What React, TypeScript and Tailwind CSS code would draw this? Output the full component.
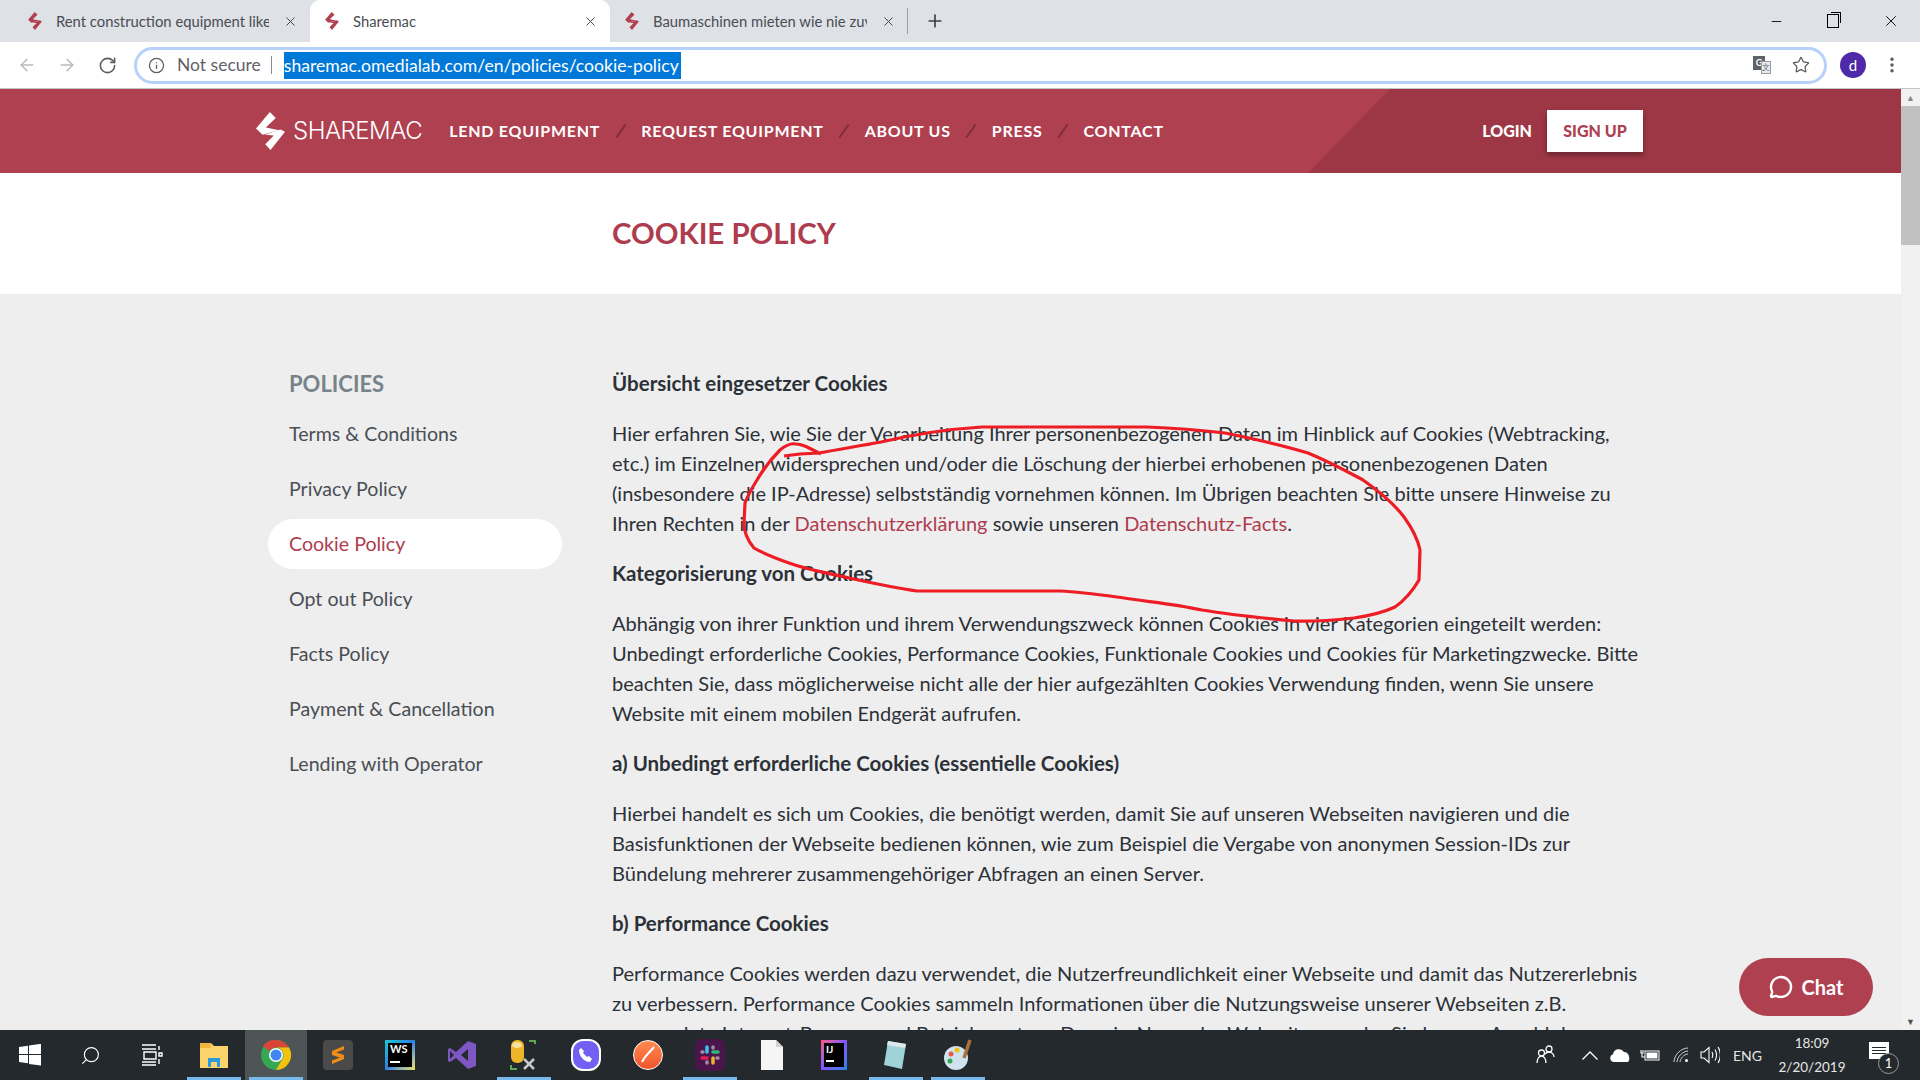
import { ArrowLeft, ArrowRight, RotateCw, Info, Star, MoreVertical, Plus, X, Minus, Search, MessageCircle } from "lucide-react";

const Bolt = ({ c = "#b03f50", w = 14, h = 18 }: { c?: string; w?: number; h?: number }) => (
  <svg width={w} height={h} viewBox="18 15 88 115" className="shrink-0">
    <path d="M60 15L78 33L48 62L88 70L38 84L18 65Z" fill={c} />
    <path d="M92 68L106 75L62 130L46 113L72 86L45 84Z" fill={c} />
  </svg>
);

function Tab({ title, active, w, lead }: { title: string; active?: boolean; w: string; lead?: boolean }) {
  return (
    <div className={`${w} h-[42px] flex items-center pr-[12px] gap-[14px] ${lead ? "pl-[26px]" : "pl-[15px]"} ${active ? "bg-white rounded-t-[10px]" : ""}`}>
      <Bolt />
      <span className="flex-1 text-[14.800px] text-[#4a4d52] overflow-hidden whitespace-nowrap">{title}</span>
      <X size={15} strokeWidth={1.5} className="text-[#3c3f43] shrink-0" />
    </div>
  );
}

const Slash = () => <span className="block w-[2px] h-[16px] bg-[#7f2f3c] rotate-[35deg] mx-[19.500px]" />;

const nav = ["LEND EQUIPMENT", "REQUEST EQUIPMENT", "ABOUT US", "PRESS", "CONTACT"];
const side = ["Terms & Conditions", "Privacy Policy", "Cookie Policy", "Opt out Policy", "Facts Policy", "Payment & Cancellation", "Lending with Operator"];

const H = ({ children }: { children: React.ReactNode }) => <h3 className="font-bold text-[20.500px] leading-[30px] mb-[20px] text-[#2c3138]">{children}</h3>;
const P = ({ children }: { children: React.ReactNode }) => <p className="text-[20.050px] leading-[30px] mb-[20px] text-[#2c3138]">{children}</p>;

function TaskIcon({ children, active, under }: { children: React.ReactNode; active?: boolean; under?: boolean }) {
  return (
    <div className={`relative w-[62px] h-[50px] flex items-center justify-center ${active ? "bg-[#4e5557]" : ""}`}>
      {children}
      {under && <div className="absolute bottom-0 left-[4px] right-[4px] h-[3px] bg-[#76b9ed]" />}
    </div>
  );
}

export default function App() {
  return (
    <div className="w-[1920px] h-[1080px] flex flex-col overflow-hidden relative bg-white" style={{ fontFamily: '"Lato","Noto Sans",sans-serif' }}>
      {/* tab strip */}
      <div className="h-[42px] bg-[#dee1e6] flex items-center shrink-0">
        <div className="w-[2px]" />
        <Tab title="Rent construction equipment like" w="w-[308px]" lead />
        <Tab title="Sharemac" active w="w-[300px]" />
        <Tab title="Baumaschinen mieten wie nie zuvor" w="w-[298px]" />
        <div className="w-px h-[26px] bg-[#9aa0a6] ml-[-1px]" />
        <Plus size={20} strokeWidth={2} className="ml-[17px] text-[#3c4043]" />
        <div className="flex-1" />
        <Minus size={15} strokeWidth={1.4} className="text-black mr-[43px]" />
        <div className="relative w-[12px] h-[14px] border border-black mr-[43px]"><div className="absolute -top-[3px] -right-[3px] w-[10px] h-[11px] border-t border-r border-black" /></div>
        <X size={18} strokeWidth={1.2} className="text-black mr-[20px]" />
      </div>
      {/* toolbar */}
      <div className="h-[47px] bg-white border-b border-[#c4c4c4] flex items-center shrink-0">
        <ArrowLeft size={20} strokeWidth={1.7} className="ml-[17px] text-[#b8babd]" />
        <ArrowRight size={20} strokeWidth={1.7} className="ml-[20px] text-[#b8babd]" />
        <RotateCw size={19} strokeWidth={2} className="ml-[21px] text-[#5a5d61]" />
        <div className="ml-[17px] w-[1693px] h-[37px] rounded-full border-[3px] border-[#b6d2fb] flex items-center pl-[11px] pr-[14px]">
          <Info size={17} strokeWidth={1.8} className="text-[#5a5d61]" />
          <span className="ml-[12px] text-[17.500px] text-[#5f6368]">Not secure</span>
          <span className="ml-[10px] w-px h-[18px] bg-[#8a8d91]" />
          <span className="ml-[12px] h-[27px] bg-[#0078d7] text-white text-[17.600px] leading-[27px] w-[397px] whitespace-nowrap overflow-hidden">sharemac.omedialab.com/en/policies/cookie-policy</span>
          <div className="flex-1" />
          <div className="relative w-[18px] h-[18px] mr-[21px]"><div className="absolute left-0 top-0 w-[12px] h-[14px] bg-[#5f6368] text-white text-[9px] leading-[14px] text-center font-bold">G</div><div className="absolute right-0 bottom-0 w-[10px] h-[13px] bg-[#e8eaed] border border-[#9a9da1] text-[8px] leading-[11px] text-center text-[#5f6368]">文</div></div>
          <Star size={18} strokeWidth={1.7} className="text-[#5a5d61]" />
        </div>
        <div className="ml-[13px] w-[26px] h-[26px] rounded-full bg-[#4e2aa8] text-white text-[15px] leading-[26px] text-center">d</div>
        <MoreVertical size={20} strokeWidth={2.2} className="ml-[16px] text-[#5a5d61]" />
      </div>

      {/* page */}
      <div className="flex-1 flex min-h-0 relative">
        <div className="flex-1 min-w-0 overflow-hidden flex flex-col relative">
          <header className="h-[84px] shrink-0 bg-[#af404f] relative overflow-hidden flex items-center">
            <svg className="absolute inset-0" width="1901" height="84" viewBox="0 0 1901 84"><polygon points="1390,0 1901,0 1901,84 1308,84" fill="#9d3745" /></svg>
            <div className="relative flex items-center w-full pl-[256px] pr-[258px]">
              <Bolt c="#ffffff" w={29} h={38} />
              <span className="ml-[8px] text-[24px] leading-none text-white tracking-[-0.5px] font-light" style={{ fontFamily: '"Inter",sans-serif' }}>SHAREMAC</span>
              <nav className="ml-[27px] flex items-center text-white font-bold text-[16px] tracking-[0.75px]">
                {nav.map((n, i) => (
                  <div key={n} className="flex items-center">
                    {i > 0 && <Slash />}
                    <span>{n}</span>
                  </div>
                ))}
              </nav>
              <div className="flex-1" />
              <span className="text-white font-black text-[16px] mr-[15px]">LOGIN</span>
              <button className="w-[96px] h-[42px] bg-white text-[#af404f] font-black text-[16px] shadow-[0_3px_5px_rgba(0,0,0,0.35)]">SIGN UP</button>
            </div>
          </header>
          <div className="h-[121px] shrink-0 bg-white pl-[612px] flex items-center">
            <h1 className="text-[29.400px] font-bold text-[#ae3c4e] leading-none -translate-y-[1px]">COOKIE POLICY</h1>
          </div>
          <div className="flex-1 min-h-0 bg-[#eeeeee] flex pl-[268px] pt-[74px] overflow-hidden">
            <aside className="w-[294px] shrink-0 pt-[1px]">
              <div className="pl-[21px] h-[30px] text-[22px] leading-[30px] font-bold text-[#77838a] mb-[10px]">POLICIES</div>
              <ul>
                {side.map((s) => (
                  <li key={s} className={`h-[50px] mb-[5px] pl-[21px] flex items-center text-[19.600px] rounded-full ${s === "Cookie Policy" ? "bg-white text-[#ae3c4e]" : "text-[#4a4f55]"}`}>{s}</li>
                ))}
              </ul>
            </aside>
            <main className="ml-[50px] w-[1030px] shrink-0">
              <H>Übersicht eingesetzer Cookies</H>
              <P>Hier erfahren Sie, wie Sie der Verarbeitung Ihrer personenbezogenen Daten im Hinblick auf Cookies (Webtracking, etc.) im Einzelnen widersprechen und/oder die Löschung der hierbei erhobenen personenbezogenen Daten (insbesondere die IP-Adresse) selbstständig vornehmen können. Im Übrigen beachten Sie bitte unsere Hinweise zu Ihren Rechten in der <span className="text-[#ae3c4e]">Datenschutzerklärung</span> sowie unseren <span className="text-[#ae3c4e]">Datenschutz-Facts</span>.</P>
              <H>Kategorisierung von Cookies</H>
              <P>Abhängig von ihrer Funktion und ihrem Verwendungszweck können Cookies in vier Kategorien eingeteilt werden: Unbedingt erforderliche Cookies, Performance Cookies, Funktionale Cookies und Cookies für Marketingzwecke. Bitte beachten Sie, dass möglicherweise nicht alle der hier aufgezählten Cookies Verwendung finden, wenn Sie unsere Website mit einem mobilen Endgerät aufrufen.</P>
              <H>a) Unbedingt erforderliche Cookies (essentielle Cookies)</H>
              <P>Hierbei handelt es sich um Cookies, die benötigt werden, damit Sie auf unseren Webseiten navigieren und die Basisfunktionen der Webseite bedienen können, wie zum Beispiel die Vergabe von anonymen Session-IDs zur Bündelung mehrerer zusammengehöriger Abfragen an einen Server.</P>
              <H>b) Performance Cookies</H>
              <P>Performance Cookies werden dazu verwendet, die Nutzerfreundlichkeit einer Webseite und damit das Nutzererlebnis zu verbessern. Performance Cookies sammeln Informationen über die Nutzungsweise unserer Webseiten z.B. verwendete Internet-Browser und Betriebssystem, Domain-Name der Webseite, von der Sie kamen, Anzahl der</P>
            </main>
          </div>
          <button className="absolute left-[1739px] top-[869px] w-[134px] h-[58px] rounded-full bg-[#af404f] text-white font-bold text-[20px] flex items-center justify-center gap-[9px]">
            <MessageCircle size={24} strokeWidth={2.4} /> Chat
          </button>
        </div>
        {/* scrollbar */}
        <div className="w-[19px] shrink-0 bg-[#f1f1f1] flex flex-col items-center">
          <div className="h-[17px] flex items-center justify-center text-[#8a8a8a] text-[9px]">▲</div>
          <div className="h-[139px] w-full bg-[#c1c1c1]" />
          <div className="flex-1" />
          <div className="h-[17px] flex items-center justify-center text-[#505050] text-[9px]">▼</div>
        </div>
      </div>

      {/* taskbar */}
      <div className="h-[50px] shrink-0 bg-[#23292c] flex items-center text-white">
        <div className="w-[60px] flex justify-center">
          <svg width="22" height="22" viewBox="0 0 22 22"><path d="M0 3l9-1.3V10H0zM10 1.500l12-1.700V10H10zM0 11h9v8.300L0 18zM10 11h12v10.500L10 20z" fill="#fff" /></svg>
        </div>
        <div className="w-[60px] flex justify-center"><Search size={21} strokeWidth={1.3} className="scale-x-[-1]" /></div>
        <div className="w-[63px] flex justify-center">
          <svg width="22" height="22" viewBox="0 0 22 22" fill="none" stroke="#fff" strokeWidth="1.400"><path d="M1 1h14M1 5h14M3 8h12v7H3zM1 18h14M1 21h14M18 2v4M18 9h3v3h-3zM18 15v5" /></svg>
        </div>
        <TaskIcon under>
          <svg width="30" height="28" viewBox="0 0 30 28"><path d="M1 2h11l3 3h14v22H1z" fill="#fbd46b" /><path d="M1 2h11v5H1z" fill="#f0b63f" /><path d="M9 26v-9h12v9h-3v-5h-6v5z" fill="#2b9ae0" /></svg>
        </TaskIcon>
        <TaskIcon active under>
          <svg width="30" height="30" viewBox="0 0 30 30"><circle cx="15" cy="15" r="15" fill="#34a853" /><path d="M15 0a15 15 0 0113 7.500H15a7.500 7.500 0 00-6.500 3.750L2 6A15 15 0 0115 0z" fill="#db4437" /><path d="M28 7.500A15 15 0 0115 30l6.500-11.250A7.500 7.500 0 0015 7.500z" fill="#f4c20d" /><circle cx="15" cy="15" r="7" fill="#fff" /><circle cx="15" cy="15" r="5.500" fill="#4285f4" /></svg>
        </TaskIcon>
        <TaskIcon>
          <div className="w-[30px] h-[30px] rounded-[4px] bg-[#4a4a4a] flex items-center justify-center"><svg width="14" height="20" viewBox="0 0 14 20"><path d="M13 1L1 6v4l12 4v-4L5 7.500l8-3zM1 10l8 2.500-8 3V19l12-5v-4L1 6z" fill="#f28c13" /></svg></div>
        </TaskIcon>
        <TaskIcon>
          <div className="relative w-[30px] h-[30px] bg-gradient-to-br from-[#19c9d6] via-[#2f7fe0] to-[#f3e24a] p-[3px]"><div className="w-full h-full bg-black text-white text-[11px] leading-[12px] font-bold pl-[2px]">WS<div className="w-[10px] h-[2px] mt-[6px] bg-white" /></div></div>
        </TaskIcon>
        <TaskIcon>
          <svg width="30" height="30" viewBox="0 0 30 30"><path d="M21 1l8 3v22l-8 3-12-11-6 4-2-1V9l2-1 6 4zM21 9l-7 6 7 6zM3 11v8l4-4z" fill="#7e57c2" /></svg>
        </TaskIcon>
        <TaskIcon under>
          <svg width="30" height="32" viewBox="0 0 30 32"><rect x="2" y="1" width="13" height="23" rx="6" fill="#f0b429" /><ellipse cx="8" cy="6" rx="5" ry="3" fill="#f8e2a4" /><path d="M20 2h6v3M2 26v4h6" stroke="#5fa65a" strokeWidth="2" fill="none" /><path d="M15 20l10 10M25 20L15 30" stroke="#c9c9c9" strokeWidth="2.500" /></svg>
        </TaskIcon>
        <TaskIcon>
          <div className="w-[30px] h-[32px] rounded-[12px] bg-[#7360f2] border-2 border-white flex items-center justify-center"><svg width="16" height="16" viewBox="0 0 16 16"><path d="M3 1l3 3-1 2 4 4 2-1 3 3-2 3C6 15 1 9 1 3z" fill="#fff" /></svg></div>
        </TaskIcon>
        <TaskIcon>
          <div className="w-[30px] h-[30px] rounded-full bg-gradient-to-b from-[#ff8a50] to-[#f0532b] border border-white flex items-center justify-center"><svg width="16" height="18" viewBox="0 0 16 18"><path d="M14 1L5 11M5 11l-3 5" stroke="#fff" strokeWidth="2" /></svg></div>
        </TaskIcon>
        <TaskIcon under>
          <div className="w-[30px] h-[32px] rounded-[6px] bg-[#4a154b] flex items-center justify-center"><svg width="20" height="20" viewBox="0 0 20 20" strokeWidth="3.500" strokeLinecap="round"><path d="M7 2v5" stroke="#36c5f0" /><path d="M13 7h5" stroke="#2eb67d" /><path d="M13 13v5" stroke="#ecb22e" /><path d="M2 13h5" stroke="#e01e5a" /><path d="M2 7h1M13 2v1M17 13h1M7 17v1" stroke="#fff" strokeOpacity="0.5" /></svg></div>
        </TaskIcon>
        <TaskIcon>
          <svg width="24" height="30" viewBox="0 0 24 30"><path d="M1 0h15l7 7v23H1z" fill="#f5f5f5" /><path d="M16 0l7 7h-7z" fill="#cfcfcf" /></svg>
        </TaskIcon>
        <TaskIcon>
          <div className="w-[26px] h-[30px] bg-gradient-to-br from-[#fc4f7d] via-[#7f52ff] to-[#0a84e0] p-[3px]"><div className="w-full h-full bg-black text-white text-[10px] font-bold leading-[12px] pl-[2px]">IJ<div className="w-[8px] h-[2px] mt-[5px] bg-white" /></div></div>
        </TaskIcon>
        <TaskIcon under>
          <svg width="26" height="32" viewBox="0 0 26 32"><path d="M5 2l18 3-4 25L1 26z" fill="#9fd3d8" /><path d="M5 2l18 3-1 4L4 6z" fill="#dfe8ea" /></svg>
        </TaskIcon>
        <TaskIcon under>
          <svg width="30" height="32" viewBox="0 0 30 32"><ellipse cx="13" cy="19" rx="12" ry="12" fill="#cfe3ef" /><circle cx="8" cy="15" r="2.500" fill="#e25c4a" /><circle cx="14" cy="11" r="2.500" fill="#f4c20d" /><circle cx="7" cy="22" r="2.500" fill="#34a853" /><path d="M27 1l-6 18" stroke="#a9713b" strokeWidth="3.500" /></svg>
        </TaskIcon>
        <div className="flex-1" />
        {/* tray */}
        <svg width="19" height="19" viewBox="0 0 19 19" fill="none" stroke="#fff" strokeWidth="1.300" className="-translate-y-[1px]"><circle cx="13" cy="4" r="3" /><circle cx="5.500" cy="8" r="3" /><path d="M1 18c0-4 2-7 4.500-7s4.500 3 4.500 7M9 9c1-1 2.500-2 4-2 2.500 0 5 2 5 5" /></svg>
        <svg width="16" height="9" viewBox="0 0 16 9" fill="none" stroke="#fff" strokeWidth="1.300" className="ml-[27px]"><path d="M0.500 8.500L8 1l7.500 7.500" /></svg>
        <svg width="20" height="13" viewBox="0 0 20 13" className="ml-[12px]"><path d="M4 13a4 4 0 01-1-7.800A6 6 0 0114 3a5 5 0 015 5 5 5 0 01-1 5z" fill="#fff" /></svg>
        <svg width="20" height="12" viewBox="0 0 20 12" className="ml-[10px]" fill="none" stroke="#fff"><path d="M1 1v3h2v-3M2 4v4h3" strokeWidth="1.100" /><rect x="5" y="2" width="14" height="9" strokeWidth="1" /><rect x="6.500" y="3.500" width="11" height="6" fill="#fff" stroke="none" /></svg>
        <svg width="16" height="16" viewBox="0 0 16 16" className="ml-[13px]" fill="none" stroke="#cfd2d3" strokeWidth="1"><path d="M1 15C1 8 8 1 15 1M4 15c0-5 6-11 11-11M7 15c0-3 4-8 8-8" /><circle cx="13.500" cy="13.500" r="1.500" fill="#fff" stroke="none" /></svg>
        <svg width="20" height="18" viewBox="0 0 20 18" className="ml-[11px]" fill="none" stroke="#fff" strokeWidth="1.100"><path d="M1 6h3l5-4.500v15L4 12H1zM12 6c1 2 1 4 0 6M15 3.500c2 3.500 2 7.500 0 11M18 1c3 5 3 11 0 16" /></svg>
        <span className="ml-[13px] w-[28px] text-[14px] text-[#e6e6e6] whitespace-nowrap">ENG</span>
        <div className="ml-[15px] w-[72px] text-center text-[13.500px] leading-[24px] text-[#e6e6e6]"><div>18:09</div><div>2/20/2019</div></div>
        <div className="relative ml-[21px] mr-[31px] w-[20px] h-[17px] bg-white flex flex-col justify-center gap-[2px] px-[3px] -translate-y-[5px]">
          <div className="h-px bg-[#23292c]" /><div className="h-px bg-[#23292c]" /><div className="h-px bg-[#23292c]" />
          <div className="absolute left-[9px] top-[11px] w-[21px] h-[21px] rounded-full bg-[#23292c] border border-[#9a9a9a] text-[13px] leading-[19px] text-center text-white">1</div>
        </div>
      </div>

      {/* pen annotation */}
      <svg className="absolute left-0 top-0 pointer-events-none" width="1920" height="1080" viewBox="0 0 1920 1080">
        <path d="M784 456 L800 454 L819 453 C840 449 860 446 881 442 C915 434 950 429 982 427 L1147 427 C1175 428 1200 430 1225 433 C1255 439 1285 446 1308 453 C1330 462 1348 472 1363 480 C1380 492 1395 505 1404 517 C1412 528 1418 540 1420 550 L1419 580 C1412 592 1405 600 1395 607 C1382 613 1368 616 1354 618 C1335 620 1315 622 1294 621 C1262 618 1232 615 1202 610 C1175 604 1150 602 1124 598 C1102 595 1082 592 1060 591 L917 591 C895 588 872 583 849 578 C828 573 808 570 789 563 C775 558 764 554 754 548 C748 541 744 532 744 523 L745 503 C748 495 752 488 757 480 C764 468 772 458 780 450 C786 445 791 443 796 444 C801 444 804 446 807 447 L821 454" fill="none" stroke="#ee1c25" strokeWidth="3.200" strokeLinejoin="round" />
      </svg>
    </div>
  );
}
